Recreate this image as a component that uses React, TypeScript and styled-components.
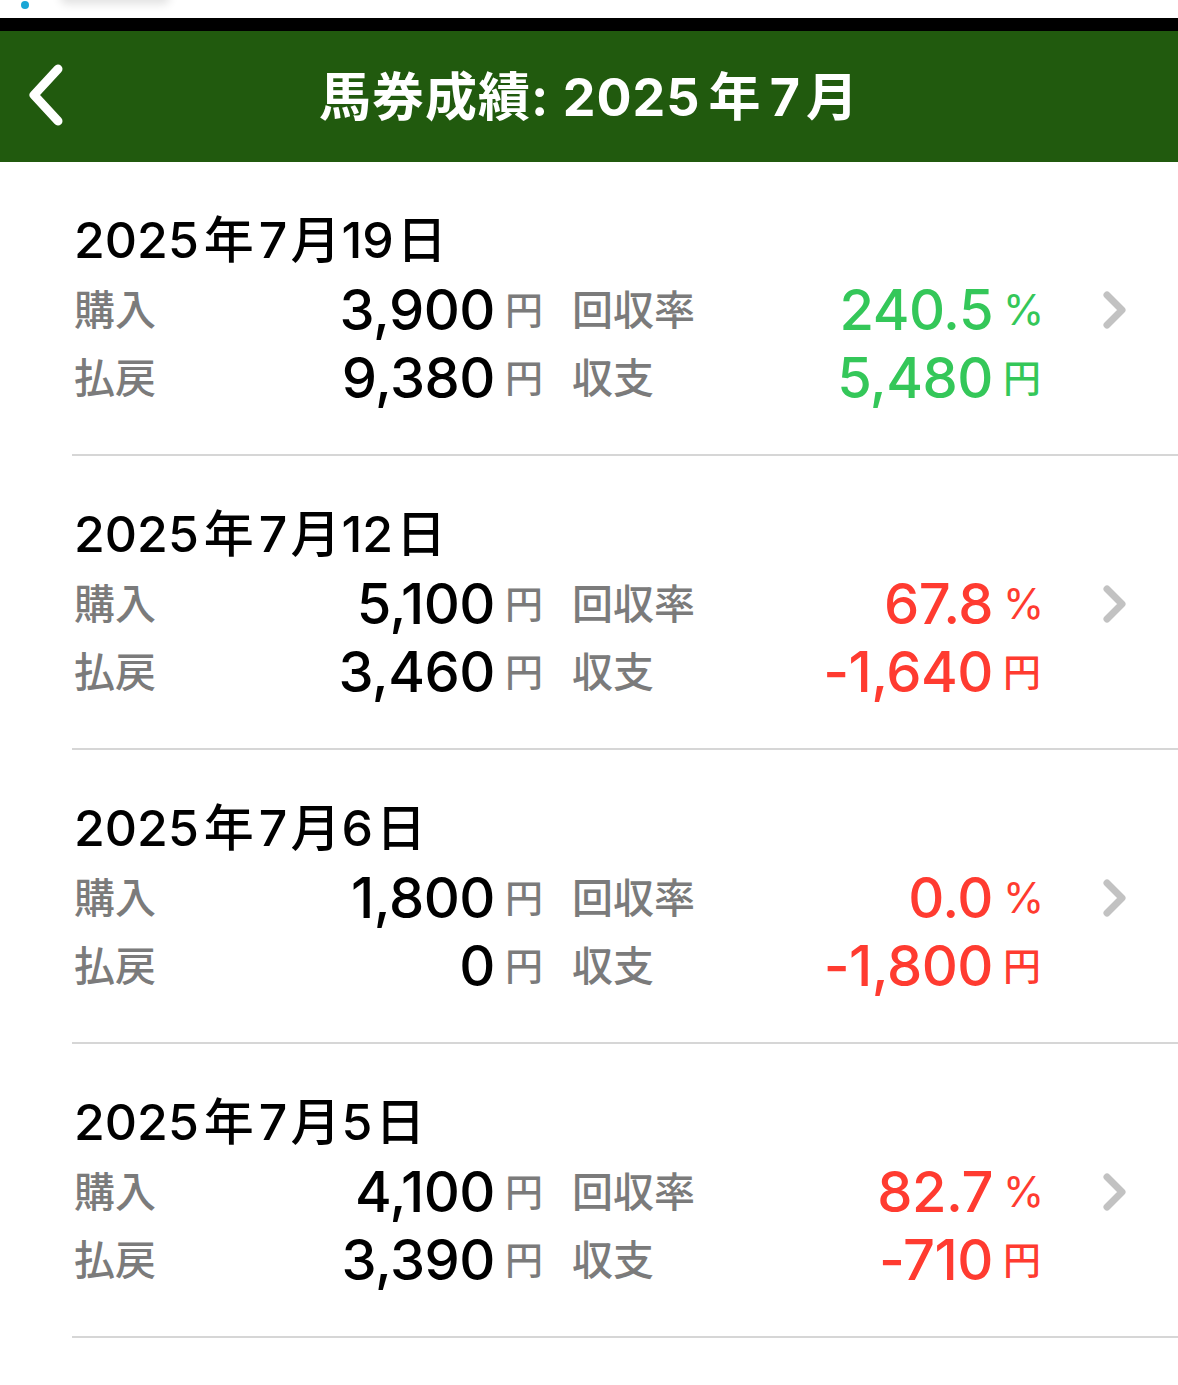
import React, { FC } from 'react';
import styled, { createGlobalStyle } from 'styled-components';

type Day = {
  year: string;
  month: string;
  day: string;
  buy: string;
  payout: string;
  rate: string;
  balance: string;
  win: boolean;
};

const days: Day[] = [
  { year: '2025', month: '7', day: '19', buy: '3,900', payout: '9,380', rate: '240.5', balance: '5,480', win: true },
  { year: '2025', month: '7', day: '12', buy: '5,100', payout: '3,460', rate: '67.8', balance: '-1,640', win: false },
  { year: '2025', month: '7', day: '6', buy: '1,800', payout: '0', rate: '0.0', balance: '-1,800', win: false },
  { year: '2025', month: '7', day: '5', buy: '4,100', payout: '3,390', rate: '82.7', balance: '-710', win: false },
];

const GlobalStyle = createGlobalStyle`
  html, body {
    margin: 0;
    padding: 0;
    background: #fff;
  }
  body {
    font-family: "Inter", "Noto Sans CJK JP", sans-serif;
    -webkit-font-smoothing: antialiased;
  }
`;

const App: FC = () => {
  return (
    <Page>
      <GlobalStyle />
      {/* status strip */}
      <TopStrip>
        <Dot />
        <Smudge />
      </TopStrip>
      <BlackBar />
      {/* nav */}
      <Header>
        <BackButton aria-label="back">
          <svg width="44" height="68" viewBox="0 0 44 68">
            <path
              d="M34 8 L10 34 L34 60"
              fill="none"
              stroke="#fff"
              strokeWidth="9"
              strokeLinecap="round"
              strokeLinejoin="round"
            />
          </svg>
        </BackButton>
        <Title>
          馬券成績: 2025<Kanji $l={8} $r={8}>年</Kanji>7<Kanji $l={5} $r={0}>月</Kanji>
        </Title>
      </Header>
      {/* list */}
      <List>
        {days.map((d) => (
          <Row key={d.day}>
            <DateText>
              {d.year}
              <Kanji $l={5} $r={5}>年</Kanji>
              {d.month}
              <Kanji $l={3} $r={1}>月</Kanji>
              {d.day}
              <Kanji $l={3} $r={0}>日</Kanji>
            </DateText>
            <Line>
              <Label>購入</Label>
              <Value>{d.buy}</Value>
              <Unit>円</Unit>
              <Label>回収率</Label>
              <Value $tone={d.win ? 'win' : 'lose'}>{d.rate}</Value>
              <Unit $tone={d.win ? 'win' : 'lose'} $pct>%</Unit>
              <Chevron>
                <svg width="28" height="40" viewBox="0 0 28 40">
                  <path
                    d="M6 5 L21 20 L6 35"
                    fill="none"
                    stroke="#c2c2c2"
                    strokeWidth="7"
                    strokeLinecap="round"
                    strokeLinejoin="round"
                  />
                </svg>
              </Chevron>
            </Line>
            <Line>
              <Label>払戻</Label>
              <Value>{d.payout}</Value>
              <Unit>円</Unit>
              <Label>収支</Label>
              <Value $tone={d.win ? 'win' : 'lose'}>{d.balance}</Value>
              <Unit $tone={d.win ? 'win' : 'lose'}>円</Unit>
              <span />
            </Line>
          </Row>
        ))}
      </List>
    </Page>
  );
};

const toneColor = (t?: 'win' | 'lose') =>
  t === 'win' ? '#34c759' : t === 'lose' ? '#ff3b30' : '#000';

const Page = styled.div`
  width: 1178px;
  min-height: 1385px;
  background: #fff;
  overflow: hidden;
`;

const TopStrip = styled.div`
  height: 18px;
  position: relative;
  background: #fff;
`;

const Dot = styled.div`
  position: absolute;
  left: 21px;
  top: 1px;
  width: 8px;
  height: 8px;
  border-radius: 50%;
  background: #1aa6d6;
`;

const Smudge = styled.div`
  position: absolute;
  left: 60px;
  top: -14px;
  width: 110px;
  height: 14px;
  border-radius: 10px;
  box-shadow: 0 4px 10px rgba(0, 0, 0, 0.12);
`;

const BlackBar = styled.div`
  height: 13px;
  background: #000;
`;

const Header = styled.header`
  height: 131px;
  background: #215a0e;
  display: flex;
  align-items: center;
  justify-content: center;
  position: relative;
`;

const BackButton = styled.div`
  position: absolute;
  left: 24px;
  top: 30px;
  display: flex;
`;

const Title = styled.h1`
  margin: 0 0 6px 0;
  color: #fff;
  font-size: 52px;
  font-weight: 700;
  letter-spacing: 1px;
`;

const Kanji = styled.span<{ $l: number; $r: number }>`
  margin-left: ${(p) => p.$l}px;
  margin-right: ${(p) => p.$r}px;
`;

const List = styled.div`
  display: flex;
  flex-direction: column;
`;

const Row = styled.div`
  margin-left: 72px;
  padding: 50px 0 42px 2px;
  border-bottom: 2px solid #d6d6d6;
`;

const DateText = styled.div`
  font-size: 50px;
  line-height: 56px;
  font-weight: 500;
  color: #000;
  height: 56px;
  margin-bottom: 8px;
`;

const Line = styled.div`
  display: grid;
  grid-template-columns: 180px 241px 77px 150px 271px 80px 1fr;
  align-items: center;
  height: 68px;
`;

const Label = styled.span`
  font-size: 41px;
  font-weight: 500;
  color: #7b7b7b;
  line-height: 68px;
`;

const Value = styled.span<{ $tone?: 'win' | 'lose' }>`
  text-align: right;
  font-size: 56px;
  font-weight: 500;
  color: ${(p) => toneColor(p.$tone)};
  line-height: 68px;
  letter-spacing: -0.5px;
`;

const Unit = styled.span<{ $tone?: 'win' | 'lose'; $pct?: boolean }>`
  padding-left: 10px;
  font-size: ${(p) => (p.$pct ? '42px' : '38px')};
  font-weight: ${(p) => (p.$pct ? 400 : 500)};
  color: ${(p) => (p.$tone ? toneColor(p.$tone) : '#7b7b7b')};
  line-height: 68px;
`;

const Chevron = styled.span`
  display: flex;
  align-items: center;
  padding-left: 28px;
`;

export default App;
